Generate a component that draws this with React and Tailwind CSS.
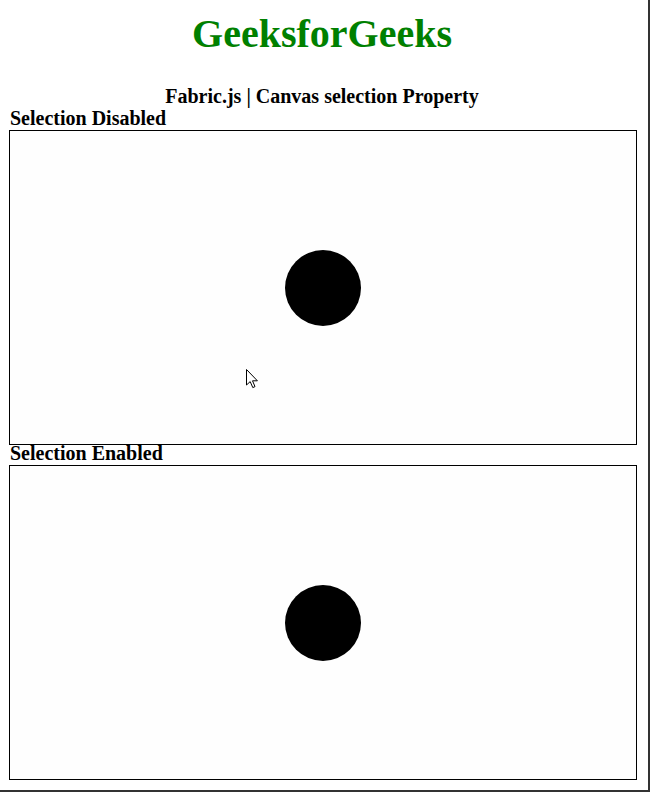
import React from "react";

const Cursor = () => (
  <svg
    className="absolute left-[236px] top-[238px]"
    width="13"
    height="20"
    viewBox="0 0 13 20"
  >
    <path
      d="M0.5 0.5 L0.5 16 L4.2 12.6 L6.8 18.6 L9 17.6 L6.5 11.8 L11.4 11.8 Z"
      fill="#fff"
      stroke="#000"
      strokeWidth="1"
      strokeLinejoin="miter"
    />
  </svg>
);

const CanvasBox = ({ label, showCursor }) => (
  <div>
    <div className="h-[20px] pl-[10px] text-[20px] leading-[16px] font-bold text-black">
      {label}
    </div>
    <div className="relative ml-[9px] w-[628px] h-[315px] border border-black bg-[#fefefe] flex items-center justify-center">
      <div className="w-[76px] h-[76px] rounded-full bg-black"></div>
      {showCursor && <Cursor />}
    </div>
  </div>
);

const App = () => {
  return (
    <div
      className="w-[650px] h-[792px] bg-white border-r-2 border-b-2 border-[#333] overflow-hidden"
      style={{ fontFamily: '"Liberation Serif", "Times New Roman", serif' }}
    >
      <div className="w-[644px]">
        <h1 className="mt-[11px] text-center text-[40px] leading-[46px] font-bold text-[#008000]">
          GeeksforGeeks
        </h1>
        <h3 className="mt-[31px] text-center text-[20px] leading-[16px] font-bold text-black">
          Fabric.js | Canvas selection Property
        </h3>
      </div>
      <div className="mt-[6px]">
        <CanvasBox label="Selection Disabled" showCursor />
        <CanvasBox label="Selection Enabled" />
      </div>
    </div>
  );
};

export default App;
